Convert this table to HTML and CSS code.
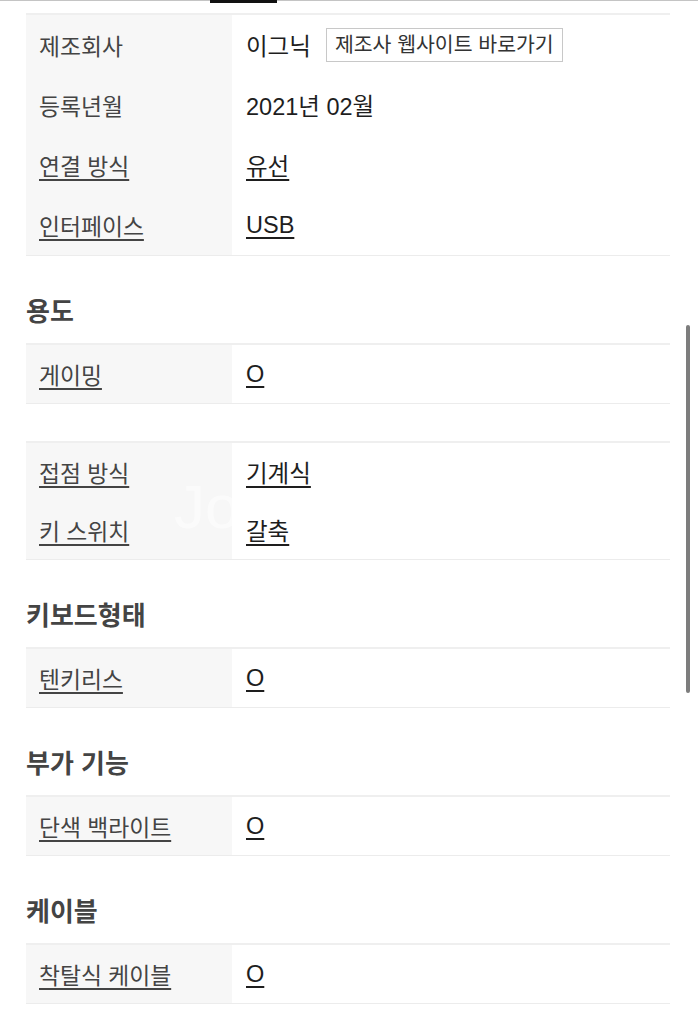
FILE: index.html
```html
<!DOCTYPE html>
<html lang="ko">
<head>
<meta charset="utf-8">
<title>제품 사양</title>
<link rel="stylesheet" href="styles.css">
</head>
<body>
<div class="tabbar"><span class="tab-indicator"></span></div>
<main class="spec">
  <section class="spec-section spec-section--first">
    <div class="spec-table spec-table--main">
      <div class="spec-row">
        <div class="spec-label">제조회사</div>
        <div class="spec-value">이그닉<span class="site-btn">제조사 웹사이트 바로가기</span></div>
      </div>
      <div class="spec-row">
        <div class="spec-label">등록년월</div>
        <div class="spec-value">2021년 02월</div>
      </div>
      <div class="spec-row">
        <div class="spec-label"><a class="link">연결 방식</a></div>
        <div class="spec-value"><a class="link">유선</a></div>
      </div>
      <div class="spec-row">
        <div class="spec-label"><a class="link">인터페이스</a></div>
        <div class="spec-value"><a class="link">USB</a></div>
      </div>
    </div>
  </section>

  <section class="spec-section">
    <h2 class="spec-title">용도</h2>
    <div class="spec-table">
      <div class="spec-row">
        <div class="spec-label"><a class="link">게이밍</a></div>
        <div class="spec-value"><a class="link">O</a></div>
      </div>
    </div>
  </section>

  <section class="spec-section spec-section--untitled">
    <div class="spec-table">
      <div class="spec-row">
        <div class="spec-label"><a class="link">접점 방식</a></div>
        <div class="spec-value"><a class="link">기계식</a></div>
      </div>
      <div class="spec-row">
        <div class="spec-label"><a class="link">키 스위치</a></div>
        <div class="spec-value"><a class="link">갈축</a></div>
      </div>
    </div>
    <span class="watermark">Jo</span>
  </section>

  <section class="spec-section">
    <h2 class="spec-title">키보드형태</h2>
    <div class="spec-table">
      <div class="spec-row">
        <div class="spec-label"><a class="link">텐키리스</a></div>
        <div class="spec-value"><a class="link">O</a></div>
      </div>
    </div>
  </section>

  <section class="spec-section">
    <h2 class="spec-title">부가 기능</h2>
    <div class="spec-table">
      <div class="spec-row">
        <div class="spec-label"><a class="link">단색 백라이트</a></div>
        <div class="spec-value"><a class="link">O</a></div>
      </div>
    </div>
  </section>

  <section class="spec-section">
    <h2 class="spec-title">케이블</h2>
    <div class="spec-table">
      <div class="spec-row">
        <div class="spec-label"><a class="link">착탈식 케이블</a></div>
        <div class="spec-value"><a class="link">O</a></div>
      </div>
    </div>
  </section>
</main>
<div class="scrollbar"></div>
</body>
</html>
```

FILE: styles.css
```css
html, body {
  margin: 0;
  padding: 0;
  background: #ffffff;
}

body {
  font-family: "Liberation Sans", "Noto Sans CJK KR", sans-serif;
  color: #222;
  height: 1024px;
  overflow: hidden;
  position: relative;
}

.tabbar {
  height: 1px;
  background: #c4c4c4;
  position: relative;
}

.tab-indicator {
  position: absolute;
  left: 210px;
  top: 0;
  width: 67px;
  height: 3px;
  background: #111;
}

.spec {
  padding: 0 28px 0 26px;
}

.spec-section {
  margin-top: 37px;
  position: relative;
}

.spec-section--first {
  margin-top: 12px;
}

.spec-title {
  margin: 0 0 16px;
  height: 34px;
  line-height: 34px;
  font-size: 26px;
  font-weight: bold;
  color: #444;
  font-family: "Noto Sans CJK KR", "Liberation Sans", sans-serif;
}

.spec-table {
  border-top: 2px solid #efefef;
  border-bottom: 1px solid #ececec;
}

.spec-row {
  display: grid;
  grid-template-columns: 206px 1fr;
  height: 58px;
}

.spec-table--main .spec-row {
  height: 60px;
}

.spec-label {
  background: #f7f7f7;
  padding-left: 13px;
  display: flex;
  align-items: center;
  font-size: 22.8px;
  color: #444;
}

.spec-value {
  padding-left: 14px;
  display: flex;
  align-items: center;
  font-size: 23.5px;
  color: #1e1e1e;
}

.link {
  color: inherit;
  text-decoration: underline;
  text-decoration-thickness: 1.5px;
  text-underline-offset: 4px;
}

.spec-label .link {
  color: #444;
}

.site-btn {
  margin-left: 15px;
  height: 34px;
  box-sizing: border-box;
  line-height: 31px;
  padding: 0 8px;
  border: 1.5px solid #c8c8c8;
  font-size: 20.5px;
  color: #333;
  white-space: nowrap;
}

.watermark {
  position: absolute;
  left: 148px;
  top: 30px;
  font-size: 62px;
  font-weight: normal;
  color: rgba(255, 255, 255, 0.55);
  pointer-events: none;
}

.scrollbar {
  position: absolute;
  left: 686px;
  top: 325px;
  width: 4px;
  height: 368px;
  border-radius: 2px;
  background: #7d7d7d;
}
```
